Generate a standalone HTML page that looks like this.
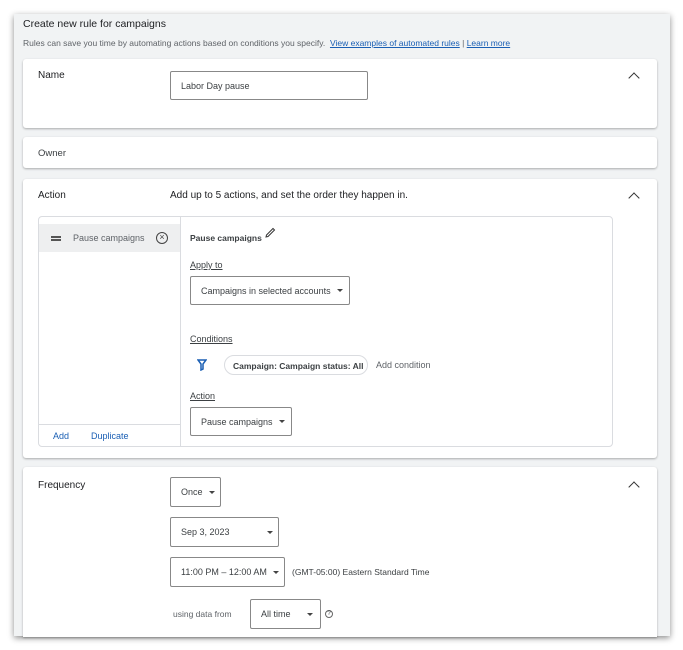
<!DOCTYPE html>
<html><head><style>
*{box-sizing:border-box;margin:0;padding:0}
body{width:683px;height:650px;background:#fff;font-family:"Liberation Sans",sans-serif;color:#3c4043;position:relative;overflow:hidden}
.a{position:absolute}
.frame{left:14px;top:14px;width:656px;height:622px;background:#f1f3f4;box-shadow:0 2px 6px rgba(0,0,0,.45)}
.card{position:absolute;left:23px;width:634px;background:#fff;border-radius:3px;box-shadow:0 1px 2px rgba(0,0,0,.3)}
.t{font-size:10px;color:#202124}
.box{position:absolute;border:1px solid #888;border-radius:2px;background:#fff;font-size:9px;color:#3c4043;display:flex;align-items:center;padding-left:10px}
.car{display:inline-block;width:0;height:0;border-left:3px solid transparent;border-right:3px solid transparent;border-top:3.5px solid #444;margin-left:6px}
.chev{position:absolute;width:8px;height:8px;border-left:1.6px solid #333;border-top:1.6px solid #333;transform:rotate(45deg)}
.u{text-decoration:underline;font-size:9px;color:#3c4043}
</style></head><body>
<div class="a frame"></div>
<div class="a t" style="left:23px;top:18px;font-size:10.5px">Create new rule for campaigns</div>
<div class="a" style="left:23px;top:38px;font-size:8.5px;color:#5f6368">Rules can save you time by automating actions based on conditions you specify.&nbsp; <span style="color:#1a5fb4;text-decoration:underline">View examples of automated rules</span> | <span style="color:#1a5fb4;text-decoration:underline">Learn more</span></div>

<div class="card" style="top:59px;height:69px"></div>
<div class="a t" style="left:38px;top:70px">Name</div>
<div class="box" style="left:170px;top:71px;width:198px;height:29px">Labor Day pause</div>
<div class="chev" style="left:630px;top:74px"></div>

<div class="card" style="top:137px;height:31px"></div>
<div class="a t" style="left:38px;top:148px;color:#3c4043;font-size:9.5px">Owner</div>

<div class="card" style="top:179px;height:279px"></div>
<div class="a t" style="left:38px;top:190px">Action</div>
<div class="a t" style="left:170px;top:190px">Add up to 5 actions, and set the order they happen in.</div>
<div class="chev" style="left:630px;top:194px"></div>
<div class="a" style="left:38px;top:216px;width:575px;height:231px;border:1px solid #dadce0;border-radius:4px"></div>
<div class="a" style="left:180px;top:216px;width:1px;height:231px;background:#dadce0"></div>
<div class="a" style="left:39px;top:224px;width:141px;height:28px;background:#eeeff0"></div>
<div class="a" style="left:51px;top:236px;width:10px;height:1.5px;background:#555"></div>
<div class="a" style="left:51px;top:239px;width:10px;height:1.5px;background:#555"></div>
<div class="a" style="left:73px;top:233px;font-size:9px;color:#5f6368">Pause campaigns</div>
<div class="a" style="left:156px;top:232px;width:12px;height:12px;border:1.3px solid #444;border-radius:50%;font-size:9px;line-height:9px;text-align:center;color:#444">×</div>
<div class="a" style="left:39px;top:424px;width:141px;height:1px;background:#dadce0"></div>
<div class="a" style="left:53px;top:431px;font-size:9px;color:#1a5fb4">Add</div>
<div class="a" style="left:91px;top:431px;font-size:9px;color:#1a5fb4">Duplicate</div>

<div class="a" style="left:190px;top:233px;font-size:8.5px;font-weight:bold;color:#3c4043">Pause campaigns</div>
<svg class="a" style="left:264px;top:227px" width="12" height="12" viewBox="0 0 12 12"><path d="M2 10 L2.5 8 L9 1.5 L10.5 3 L4 9.5 Z" fill="none" stroke="#333" stroke-width="1"/></svg>
<div class="a u" style="left:190px;top:260px">Apply to</div>
<div class="box" style="left:190px;top:276px;width:160px;height:29px">Campaigns in selected accounts<span class="car"></span></div>
<div class="a u" style="left:190px;top:334px">Conditions</div>
<svg class="a" style="left:197px;top:359px" width="10" height="12" viewBox="0 0 10 12"><path d="M1 1 H9 L6 5 V10 L4 11 V5 Z" fill="none" stroke="#1a5fb4" stroke-width="1.5"/></svg>
<div class="a" style="left:224px;top:355px;width:144px;height:20px;border:1px solid #dadce0;border-radius:10px;font-size:8.5px;font-weight:bold;color:#3c4043;padding:5px 0 0 8px">Campaign: Campaign status: All</div>
<div class="a" style="left:376px;top:360px;font-size:9px;color:#5f6368">Add condition</div>
<div class="a u" style="left:190px;top:391px">Action</div>
<div class="box" style="left:190px;top:407px;width:102px;height:29px">Pause campaigns<span class="car"></span></div>

<div class="card" style="top:467px;height:170px;border-radius:3px 3px 0 0"></div>
<div class="a t" style="left:38px;top:480px">Frequency</div>
<div class="chev" style="left:630px;top:483px"></div>
<div class="box" style="left:170px;top:477px;width:51px;height:30px">Once<span class="car"></span></div>
<div class="box" style="left:170px;top:517px;width:109px;height:30px">Sep 3, 2023<span class="car" style="margin-left:37px"></span></div>
<div class="box" style="left:170px;top:557px;width:115px;height:30px">11:00 PM – 12:00 AM<span class="car"></span></div>
<div class="a" style="left:292px;top:567px;font-size:8.5px;color:#3c4043">(GMT-05:00) Eastern Standard Time</div>
<div class="a" style="left:173px;top:609px;font-size:8.5px;color:#5f6368">using data from</div>
<div class="box" style="left:250px;top:599px;width:71px;height:30px">All time<span class="car" style="margin-left:16px"></span></div>
<div class="a" style="left:325px;top:610px;width:8px;height:8px;border:1px solid #666;border-radius:50%;font-size:6px;line-height:6px;text-align:center">?</div>
</body></html>
